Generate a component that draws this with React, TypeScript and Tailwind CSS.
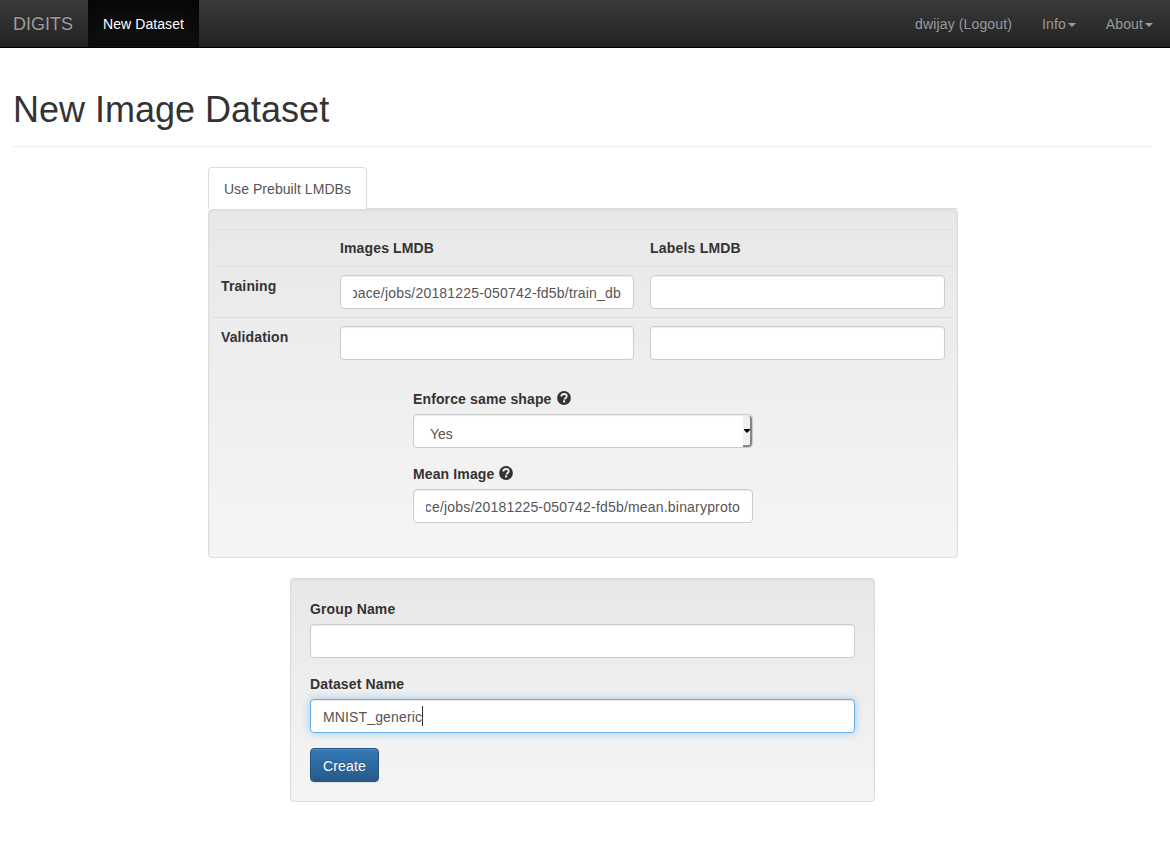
import React from 'react';

const inputClass =
  'block h-[34px] w-full rounded-[4px] border border-[#ccc] bg-white px-3 text-[14px] leading-5 text-[#555] shadow-[inset_0_1px_1px_rgba(0,0,0,0.075)] outline-none';

const wellClass =
  'rounded-[4px] border border-[#dcdcdc] bg-linear-to-b from-[#e8e8e8] to-[#f5f5f5] shadow-[inset_0_1px_3px_rgba(0,0,0,0.05),0_1px_0_rgba(255,255,255,0.1)]';

function Caret() {
  return <span className="mt-[2px] ml-[2px] border-x-4 border-t-4 border-x-transparent border-t-[#9d9d9d]" />;
}

function HelpIcon() {
  return (
    <svg className="mb-[2px] ml-[5px] h-[14px] w-[14px]" viewBox="0 0 14 14" aria-hidden="true">
      <circle cx="7" cy="7" r="6.9" fill="#333" />
      <path d="M4.3 5.6C4.3 3.8 5.4 3 7 3s2.7.9 2.7 2.3c0 1.7-2.1 1.5-2.1 3.2" fill="none" stroke="#efefef" strokeWidth="1.9" />
      <rect x="6" y="9.4" width="2.2" height="2" fill="#efefef" />
    </svg>
  );
}

function PathField({ value }: { value: string }) {
  return (
    <div className={`${inputClass} flex items-center pt-[2px]`}>
      <div className="flex flex-1 justify-end overflow-hidden">
        <span className="whitespace-nowrap tracking-[0.19px]">{value}</span>
      </div>
    </div>
  );
}

function Label({ children }: { children: React.ReactNode }) {
  return <div className="flex h-[26px] items-center pb-[5px] font-bold tracking-[0.13px]">{children}</div>;
}

export default function App() {
  return (
    <div className="h-[861px] w-[1170px] overflow-hidden bg-white font-['Liberation_Sans',Arial,sans-serif] text-[14px] leading-5 text-[#333]">
      <nav className="flex h-12 border-b border-black bg-linear-to-b from-[#3a3a3a] to-[#222] text-[#9d9d9d]">
        <a className="flex w-[88px] items-center pl-[13px] text-[18px] [text-shadow:0_-1px_0_rgba(0,0,0,0.25)]">DIGITS</a>
        <a className="flex w-[111px] items-center bg-linear-to-b from-[#080808] to-[#0f0f0f] pl-[15px] tracking-[0.08px] text-white shadow-[inset_0_3px_9px_rgba(0,0,0,0.25)] [text-shadow:0_-1px_0_rgba(0,0,0,0.25)]">
          New Dataset
        </a>
        <div className="ml-auto flex items-center gap-[30px] pr-[17px] [text-shadow:0_-1px_0_rgba(0,0,0,0.25)]">
          <a className="tracking-[0.13px]">dwijay (Logout)</a>
          <a className="flex items-center tracking-[0.12px]">Info<Caret /></a>
          <a className="flex items-center tracking-[0.12px]">About<Caret /></a>
        </div>
      </nav>

      <main className="pr-[18px] pl-[13px]">
        <header className="h-[99px] border-b border-[#eee] pt-[42px]">
          <h1 className="text-[36px] leading-[40px]">New Image Dataset</h1>
        </header>

        <form className="mt-5 ml-[195px] w-[750px]">
          <div className="flex h-[42px] border-b border-[#ddd]">
            <div className="flex h-[42px] w-[159px] items-center justify-center rounded-t-[4px] border border-b-0 border-[#ddd] bg-white tracking-[0.06px] text-[#555]">
              Use Prebuilt LMDBs
            </div>
          </div>
          <section className={`${wellClass} h-[349px] px-1 pt-[19px]`}>
            <div className="grid grid-cols-[119px_310px_311px] font-bold">
              <div className="h-[37px] border-t border-[#ddd]" />
              <div className="border-t border-[#ddd] px-2 pt-2 tracking-[0.14px]">Images LMDB</div>
              <div className="border-t border-[#ddd] px-2 pt-2 tracking-[0.2px]">Labels LMDB</div>
            </div>
            <div className="grid h-[51px] grid-cols-[119px_310px_311px] border-t border-[#ddd]">
              <div className="px-2 pt-[9px] font-bold tracking-[0.12px]">Training</div>
              <div className="px-2 pt-2"><PathField value="pace/jobs/20181225-050742-fd5b/train_db" /></div>
              <div className="px-2 pt-2"><input className={inputClass} /></div>
            </div>
            <div className="grid h-[51px] grid-cols-[119px_310px_311px] border-t border-[#ddd]">
              <div className="px-2 pt-[9px] font-bold tracking-[0.12px]">Validation</div>
              <div className="px-2 pt-2"><input className={inputClass} /></div>
              <div className="px-2 pt-2"><input className={inputClass} /></div>
            </div>
            <div className="mt-5 ml-[200px] w-[340px]">
              <Label>Enforce same shape<HelpIcon /></Label>
              <div className="flex h-[34px] overflow-hidden rounded-[4px] border border-[#ccc] bg-white text-[#555] shadow-[inset_0_1px_1px_rgba(0,0,0,0.075)]">
                <span className="flex-1 pt-[9px] pl-4">Yes</span>
                <span className="mt-px flex w-[9px] items-center justify-center rounded-r-[3px] border-r-2 border-b-2 border-[#858585] bg-[#f0f0f0]">
                  <svg className="h-[4px] w-[6px]" viewBox="0 0 6 4"><path d="M0 0h6v1L3 4 0 1Z" fill="#000" /></svg>
                </span>
              </div>
              <div className="mt-[15px]">
                <Label>Mean Image<HelpIcon /></Label>
                <PathField value="ce/jobs/20181225-050742-fd5b/mean.binaryproto" />
              </div>
            </div>
          </section>

          <section className={`${wellClass} mt-5 ml-[82px] h-[224px] w-[585px] px-[19px] pt-[19px]`}>
            <Label>Group Name</Label>
            <input className={inputClass} />
            <div className="mt-[15px]">
              <Label>Dataset Name</Label>
              <div className="flex h-[34px] items-center rounded-[4px] border border-[#66afe9] bg-white pl-3 text-[#555] shadow-[inset_0_1px_1px_rgba(0,0,0,0.075),0_0_8px_rgba(102,175,233,0.6)]">
                <span className="pt-[2px] tracking-[0.14px]">MNIST_generic</span>
                <span className="h-5 w-px bg-[#333]" />
              </div>
            </div>
            <button
              type="button"
              className="mt-[15px] h-[34px] w-[69px] rounded-[4px] border border-[#245580] bg-linear-to-b from-[#337ab7] to-[#265a88] pt-[2px] tracking-[0.15px] text-white shadow-[inset_0_1px_0_rgba(255,255,255,0.15),0_1px_1px_rgba(0,0,0,0.075)] [text-shadow:0_-1px_0_rgba(0,0,0,0.2)]"
            >
              Create
            </button>
          </section>
        </form>
      </main>
    </div>
  );
}
